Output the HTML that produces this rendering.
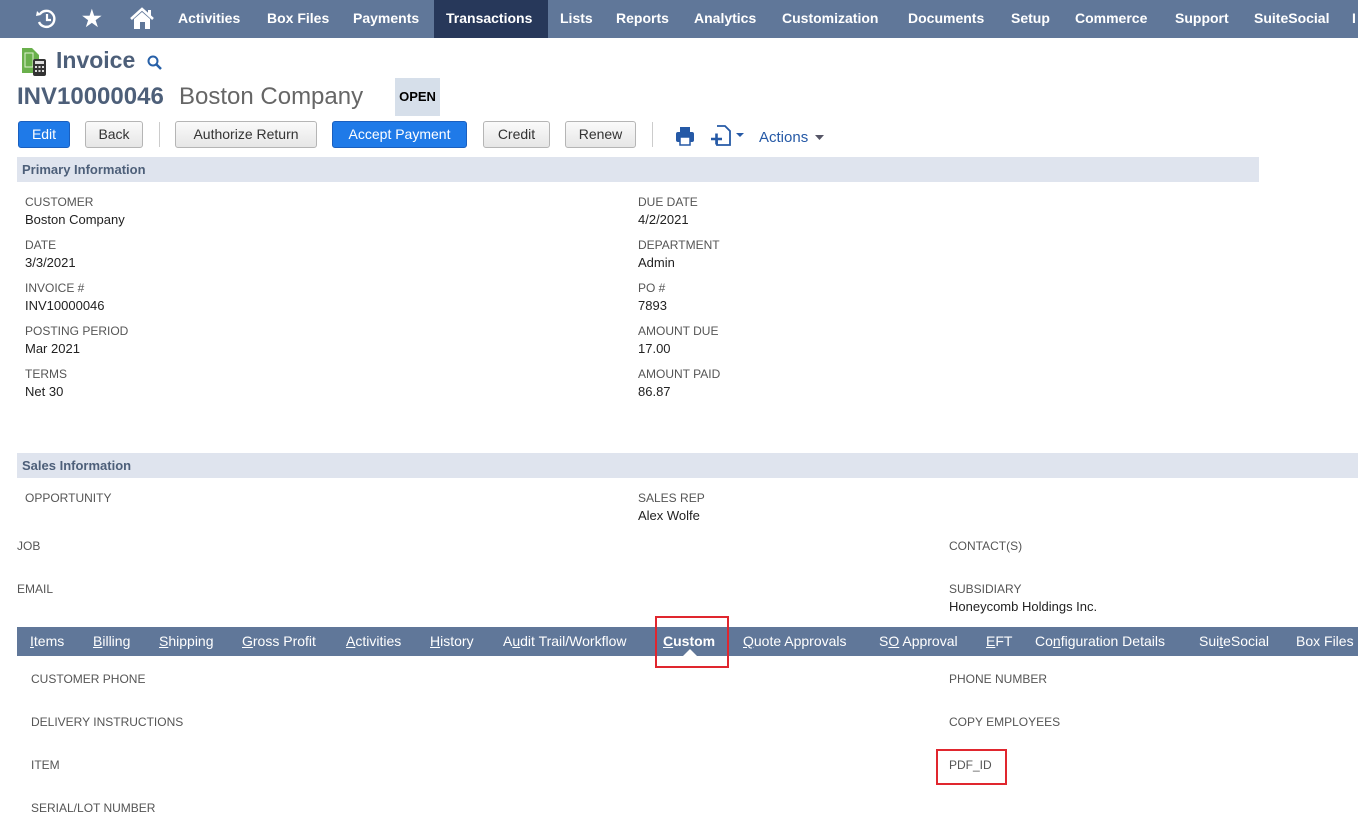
<!DOCTYPE html>
<html><head><meta charset="utf-8"><style>
*{margin:0;padding:0;box-sizing:border-box}
body{width:1358px;height:834px;overflow:hidden;background:#fff;font-family:"Liberation Sans",sans-serif;position:relative;color:#222}
.a{position:absolute;white-space:nowrap}
.nav{position:absolute;left:0;top:0;width:1358px;height:38px;background:#607799}
.nav span{position:absolute;top:10px;color:#fff;font-weight:bold;font-size:14px}
.btn{position:absolute;top:121px;height:27px;border:1px solid #b5b5b5;border-radius:3px;background:linear-gradient(#fafafa,#e6e6e6);font-size:14px;color:#333;text-align:center;line-height:25px}
.blue{background:#1f7ae8;border-color:#1a5fbf;color:#fff}
.sec{position:absolute;left:17px;height:25px;background:#dfe4ee;color:#4d5f79;font-weight:bold;font-size:13px;line-height:25px;padding-left:5px}
.l{position:absolute;font-size:12px;color:#555;text-transform:uppercase}
.v{position:absolute;font-size:13px;color:#222}
.tabs{position:absolute;left:17px;top:627px;width:1341px;height:29px;background:#607799}
.tabs span{position:absolute;top:6px;color:#fff;font-size:14px}
.tabs u{text-decoration:underline}
.red{position:absolute;border:2px solid #e0262e}
</style></head><body>
<div class="nav">
<div style="position:absolute;left:434px;top:0;width:114px;height:38px;background:#27385a"></div>
<svg class="a" style="left:35px;top:8px" width="24" height="22" viewBox="0 0 24 22"><path d="M5 6 A8 8 0 1 1 4 14" fill="none" stroke="#fff" stroke-width="2.4"/><path d="M2 3 L6 7 L1 8Z" fill="#fff"/><path d="M12 6 V12 H16" fill="none" stroke="#fff" stroke-width="2.2"/></svg>
<span style="left:82px;top:6px;font-size:22px">★</span>
<svg class="a" style="left:129px;top:7px" width="26" height="24" viewBox="0 0 26 24"><path d="M2 12 L13 2 L24 12" fill="none" stroke="#fff" stroke-width="2.6"/><path d="M5 12 V22 H21 V12 L13 5Z" fill="#fff"/><rect x="11" y="15" width="5" height="7" fill="#607799"/><rect x="19" y="3" width="3" height="6" fill="#fff"/></svg>
<span style="left:178px">Activities</span><span style="left:267px">Box Files</span><span style="left:353px">Payments</span><span style="left:446px">Transactions</span><span style="left:560px">Lists</span><span style="left:616px">Reports</span><span style="left:694px">Analytics</span><span style="left:782px">Customization</span><span style="left:908px">Documents</span><span style="left:1011px">Setup</span><span style="left:1075px">Commerce</span><span style="left:1175px">Support</span><span style="left:1254px">SuiteSocial</span><span style="left:1352px">I</span>
</div>
<svg class="a" style="left:22px;top:48px" width="26" height="28"><path d="M0 0H10L17 7V25H0Z" fill="#6ab04c"/><rect x="3" y="5" width="8" height="14" fill="none" stroke="#dff0cf" stroke-width="1"/><rect x="11" y="11" width="13" height="17" rx="2" fill="#333"/><rect x="13" y="13" width="9" height="3" fill="#ddd"/><g fill="#ddd"><rect x="13" y="18" width="2" height="2"/><rect x="16.5" y="18" width="2" height="2"/><rect x="20" y="18" width="2" height="2"/><rect x="13" y="22" width="2" height="2"/><rect x="16.5" y="22" width="2" height="2"/><rect x="20" y="22" width="2" height="2"/></g></svg>
<div class="a" style="left:56px;top:47px;font-size:23px;font-weight:bold;color:#4d5f79">Invoice</div>
<svg class="a" style="left:147px;top:55px" width="16" height="16"><circle cx="6" cy="6" r="4.5" fill="none" stroke="#2760a8" stroke-width="2"/><path d="M9.5 9.5L14 14" stroke="#2760a8" stroke-width="2.5"/></svg>
<div class="a" style="left:17px;top:83px;font-size:24px;font-weight:bold;color:#4d5f79">INV10000046</div>
<div class="a" style="left:179px;top:83px;font-size:24px;color:#666">Boston Company</div>
<div class="a" style="left:395px;top:78px;width:45px;height:38px;background:#d6dfea;font-size:13px;font-weight:bold;line-height:38px;text-align:center;color:#000">OPEN</div>
<div class="btn blue" style="left:18px;width:52px">Edit</div>
<div class="btn" style="left:85px;width:58px">Back</div>
<div class="a" style="left:159px;top:122px;width:1px;height:25px;background:#ccc"></div>
<div class="btn" style="left:175px;width:142px">Authorize Return</div>
<div class="btn blue" style="left:332px;width:135px">Accept Payment</div>
<div class="btn" style="left:483px;width:67px">Credit</div>
<div class="btn" style="left:565px;width:71px">Renew</div>
<div class="a" style="left:652px;top:122px;width:1px;height:25px;background:#ccc"></div>
<svg class="a" style="left:675px;top:126px" width="20" height="20"><rect x="5" y="1" width="10" height="5" fill="#2559a6"/><rect x="1" y="6" width="18" height="10" rx="2" fill="#2559a6"/><rect x="5" y="11" width="10" height="8" fill="#fff" stroke="#2559a6" stroke-width="1.5"/></svg>
<svg class="a" style="left:710px;top:125px" width="36" height="22"><path d="M7 1H15L20 6V20H7V13" fill="none" stroke="#2559a6" stroke-width="1.8"/><path d="M1 14H12M6.5 8.5V19.5" stroke="#2559a6" stroke-width="2.6"/><path d="M26 8H34L30 12Z" fill="#2559a6"/></svg>
<div class="a" style="left:759px;top:129px;font-size:15px;color:#2559a6">Actions</div>
<svg class="a" style="left:815px;top:135px" width="9" height="6"><path d="M0 0H9L4.5 5Z" fill="#556"/></svg>
<div class="sec" style="top:157px;width:1242px">Primary Information</div>
<div class="l" style="left:25px;top:195px">Customer</div><div class="v" style="left:25px;top:212px">Boston Company</div>
<div class="l" style="left:25px;top:238px">Date</div><div class="v" style="left:25px;top:255px">3/3/2021</div>
<div class="l" style="left:25px;top:281px">Invoice #</div><div class="v" style="left:25px;top:298px">INV10000046</div>
<div class="l" style="left:25px;top:324px">Posting Period</div><div class="v" style="left:25px;top:341px">Mar 2021</div>
<div class="l" style="left:25px;top:367px">Terms</div><div class="v" style="left:25px;top:384px">Net 30</div>
<div class="l" style="left:638px;top:195px">Due Date</div><div class="v" style="left:638px;top:212px">4/2/2021</div>
<div class="l" style="left:638px;top:238px">Department</div><div class="v" style="left:638px;top:255px">Admin</div>
<div class="l" style="left:638px;top:281px">PO #</div><div class="v" style="left:638px;top:298px">7893</div>
<div class="l" style="left:638px;top:324px">Amount Due</div><div class="v" style="left:638px;top:341px">17.00</div>
<div class="l" style="left:638px;top:367px">Amount Paid</div><div class="v" style="left:638px;top:384px">86.87</div>
<div class="sec" style="top:453px;width:1341px">Sales Information</div>
<div class="l" style="left:25px;top:491px">Opportunity</div>
<div class="l" style="left:638px;top:491px">Sales Rep</div><div class="v" style="left:638px;top:508px">Alex Wolfe</div>
<div class="l" style="left:17px;top:539px">Job</div>
<div class="l" style="left:949px;top:539px">Contact(s)</div>
<div class="l" style="left:17px;top:582px">Email</div>
<div class="l" style="left:949px;top:582px">Subsidiary</div><div class="v" style="left:949px;top:599px">Honeycomb Holdings Inc.</div>
<div class="tabs">
<span style="left:13px"><u>I</u>tems</span><span style="left:76px"><u>B</u>illing</span><span style="left:142px"><u>S</u>hipping</span><span style="left:225px"><u>G</u>ross Profit</span><span style="left:329px"><u>A</u>ctivities</span><span style="left:413px"><u>H</u>istory</span><span style="left:486px">A<u>u</u>dit Trail/Workflow</span><span style="left:646px;font-weight:bold"><u>C</u>ustom</span><span style="left:726px"><u>Q</u>uote Approvals</span><span style="left:862px">S<u>O</u> Approval</span><span style="left:969px"><u>E</u>FT</span><span style="left:1018px">Co<u>n</u>figuration Details</span><span style="left:1182px">Sui<u>t</u>eSocial</span><span style="left:1279px">Box Files</span>
<svg class="a" style="left:666px;top:22px" width="14" height="7"><path d="M0 7L7 0L14 7Z" fill="#fff"/></svg>
</div>
<div class="red" style="left:655px;top:616px;width:74px;height:52px"></div>
<div class="l" style="left:31px;top:672px">Customer Phone</div>
<div class="l" style="left:31px;top:715px">Delivery Instructions</div>
<div class="l" style="left:31px;top:758px">Item</div>
<div class="l" style="left:31px;top:801px">Serial/Lot Number</div>
<div class="l" style="left:949px;top:672px">Phone Number</div>
<div class="l" style="left:949px;top:715px">Copy Employees</div>
<div class="l" style="left:949px;top:758px">PDF_ID</div>
<div class="red" style="left:936px;top:749px;width:71px;height:36px"></div>
</body></html>
